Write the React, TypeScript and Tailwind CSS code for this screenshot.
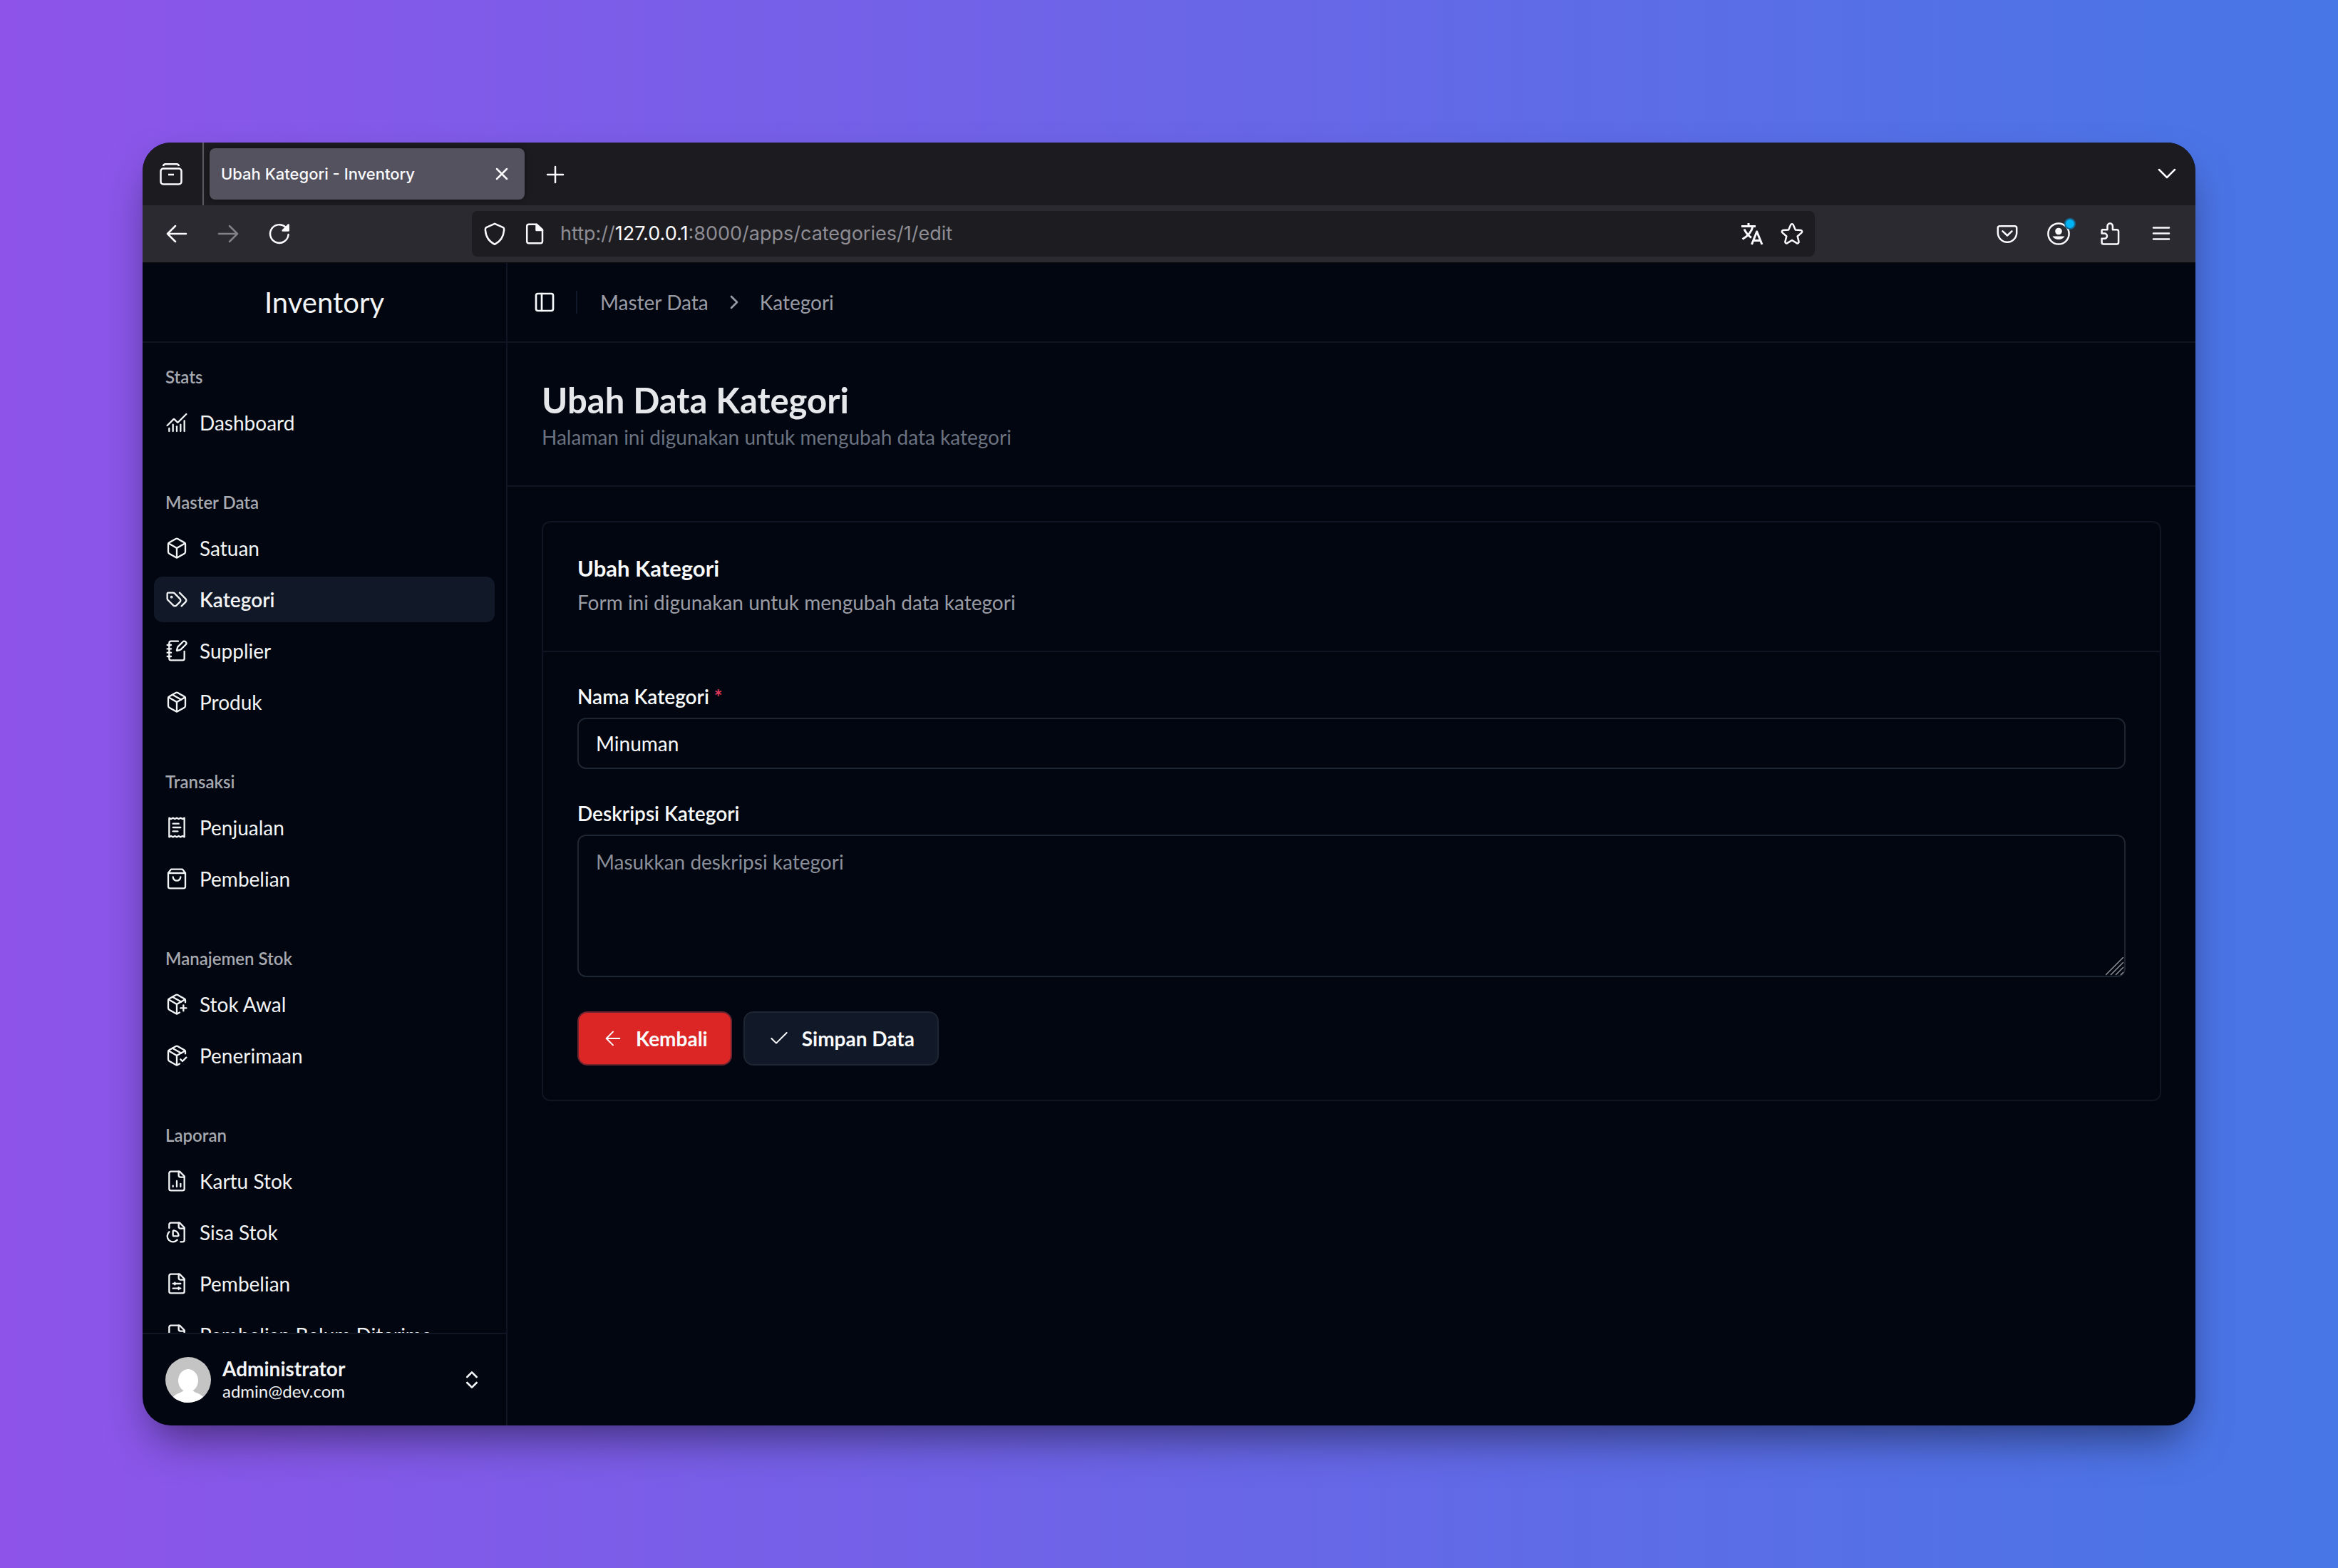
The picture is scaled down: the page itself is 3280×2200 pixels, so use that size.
import type { ReactNode } from "react";

type IconProps = { children: ReactNode; width?: string; className?: string };

/** Outline icon on a 24-unit grid. */
function Icon({ children, width = "1.5", className = "size-8 shrink-0" }: IconProps) {
  return (
    <svg
      viewBox="0 0 24 24"
      fill="none"
      stroke="currentColor"
      strokeWidth={width}
      strokeLinecap="round"
      strokeLinejoin="round"
      className={className}
      aria-hidden="true"
    >
      {children}
    </svg>
  );
}

/** Browser chrome icon on a 32-unit grid. */
function ChromeIcon({ children, className = "size-8 shrink-0" }: { children: ReactNode; className?: string }) {
  return (
    <svg
      viewBox="0 0 32 32"
      fill="none"
      stroke="currentColor"
      strokeWidth="2.5"
      strokeLinecap="round"
      strokeLinejoin="round"
      className={className}
      aria-hidden="true"
    >
      {children}
    </svg>
  );
}

const packageBody = (
  <>
    <path d="m7.5 4.27 9 5.15" />
    <path d="m3.3 7 8.7 5 8.7-5" />
    <path d="M12 22V12" />
  </>
);

const filePage = (
  <>
    <path d="M15 2H6a2 2 0 0 0-2 2v16a2 2 0 0 0 2 2h12a2 2 0 0 0 2-2V7Z" />
    <path d="M14 2v4a2 2 0 0 0 2 2h4" />
  </>
);

const icons = {
  chart: (
    <>
      <path d="M12 16v5" />
      <path d="M16 14v7" />
      <path d="M20 10v11" />
      <path d="m22 3-8.646 8.646a.5.5 0 0 1-.708 0L9.354 8.354a.5.5 0 0 0-.707 0L2 15" />
      <path d="M4 18v3" />
      <path d="M8 14v7" />
    </>
  ),
  box: (
    <>
      <path d="M21 8a2 2 0 0 0-1-1.73l-7-4a2 2 0 0 0-2 0l-7 4A2 2 0 0 0 3 8v8a2 2 0 0 0 1 1.73l7 4a2 2 0 0 0 2 0l7-4A2 2 0 0 0 21 16Z" />
      <path d="m3.3 7 8.7 5 8.7-5" />
      <path d="M12 22V12" />
    </>
  ),
  tags: (
    <>
      <path d="m15 5 6.3 6.3a2.4 2.4 0 0 1 0 3.4L17 19" />
      <path d="M9.586 5.586A2 2 0 0 0 8.172 5H3a1 1 0 0 0-1 1v5.172a2 2 0 0 0 .586 1.414L8.29 18.29a2.426 2.426 0 0 0 3.42 0l3.58-3.58a2.426 2.426 0 0 0 0-3.42z" />
      <circle cx="6.5" cy="9.5" r=".5" fill="currentColor" />
    </>
  ),
  notebook: (
    <>
      <path d="M13.4 2H6a2 2 0 0 0-2 2v16a2 2 0 0 0 2 2h12a2 2 0 0 0 2-2v-7.4" />
      <path d="M2 6h4" />
      <path d="M2 10h4" />
      <path d="M2 14h4" />
      <path d="M2 18h4" />
      <path d="M21.378 5.626a1 1 0 1 0-3.004-3.004l-5.01 5.012a2 2 0 0 0-.506.854l-.837 2.87a.5.5 0 0 0 .62.62l2.87-.837a2 2 0 0 0 .854-.506z" />
    </>
  ),
  package: (
    <>
      <path d="M21 8a2 2 0 0 0-1-1.73l-7-4a2 2 0 0 0-2 0l-7 4A2 2 0 0 0 3 8v8a2 2 0 0 0 1 1.73l7 4a2 2 0 0 0 2 0l7-4A2 2 0 0 0 21 16Z" />
      {packageBody}
    </>
  ),
  receipt: (
    <>
      <path d="M4 2v20l2-1 2 1 2-1 2 1 2-1 2 1 2-1 2 1V2l-2 1-2-1-2 1-2-1-2 1-2-1-2 1Z" />
      <path d="M14 8H8" />
      <path d="M16 12H8" />
      <path d="M13 16H8" />
    </>
  ),
  bag: (
    <>
      <path d="M6 2 3 6v14a2 2 0 0 0 2 2h14a2 2 0 0 0 2-2V6l-3-4Z" />
      <path d="M3 6h18" />
      <path d="M16 10a4 4 0 0 1-8 0" />
    </>
  ),
  packagePlus: (
    <>
      <path d="M16 16h6" />
      <path d="M19 13v6" />
      <path d="M21 10V8a2 2 0 0 0-1-1.73l-7-4a2 2 0 0 0-2 0l-7 4A2 2 0 0 0 3 8v8a2 2 0 0 0 1 1.73l7 4a2 2 0 0 0 2 0l2-1.14" />
      {packageBody}
    </>
  ),
  packageCheck: (
    <>
      <path d="m16 16 2 2 4-4" />
      <path d="M21 10V8a2 2 0 0 0-1-1.73l-7-4a2 2 0 0 0-2 0l-7 4A2 2 0 0 0 3 8v8a2 2 0 0 0 1 1.73l7 4a2 2 0 0 0 2 0l2-1.14" />
      {packageBody}
    </>
  ),
  fileChart: (
    <>
      {filePage}
      <path d="M8 18v-1" />
      <path d="M12 18v-6" />
      <path d="M16 18v-3" />
    </>
  ),
  filePie: (
    <>
      <path d="M14 2v4a2 2 0 0 0 2 2h4" />
      <path d="M16 22h2a2 2 0 0 0 2-2V7l-5-5H6a2 2 0 0 0-2 2v3.5" />
      <path d="M4.017 11.512a6 6 0 1 0 8.466 8.475" />
      <path d="M9 16a1 1 0 0 1-1-1v-4c0-.552.45-1.008.995-.917a6 6 0 0 1 4.922 4.922c.091.544-.365.995-.917.995z" />
    </>
  ),
  fileSliders: (
    <>
      {filePage}
      <path d="M8 12h8" />
      <path d="M10 11v2" />
      <path d="M8 17h8" />
      <path d="M14 16v2" />
    </>
  ),
  file: filePage,
};

type MenuItem = { label: string; icon: keyof typeof icons; active?: boolean };

const menu: { title: string; items: MenuItem[] }[] = [
  { title: "Stats", items: [{ label: "Dashboard", icon: "chart" }] },
  {
    title: "Master Data",
    items: [
      { label: "Satuan", icon: "box" },
      { label: "Kategori", icon: "tags", active: true },
      { label: "Supplier", icon: "notebook" },
      { label: "Produk", icon: "package" },
    ],
  },
  {
    title: "Transaksi",
    items: [
      { label: "Penjualan", icon: "receipt" },
      { label: "Pembelian", icon: "bag" },
    ],
  },
  {
    title: "Manajemen Stok",
    items: [
      { label: "Stok Awal", icon: "packagePlus" },
      { label: "Penerimaan", icon: "packageCheck" },
    ],
  },
  {
    title: "Laporan",
    items: [
      { label: "Kartu Stok", icon: "fileChart" },
      { label: "Sisa Stok", icon: "filePie" },
      { label: "Pembelian", icon: "fileSliders" },
      { label: "Pembelian Belum Diterima", icon: "file" },
    ],
  },
];

function ChromeButton({ label, children, className = "" }: { label: string; children: ReactNode; className?: string }) {
  return (
    <button type="button" aria-label={label} className={`flex h-16 w-16 shrink-0 items-center justify-center ${className}`}>
      {children}
    </button>
  );
}

function TabStrip() {
  return (
    <div className="flex h-[88px] shrink-0 items-center bg-[#1c1b20] pr-2 text-[#fbfbfe]">
      <button type="button" aria-label="Firefox View" className="flex h-full w-[86px] shrink-0 items-center justify-center border-r-2 border-[#5b5b62] pr-1">
        <ChromeIcon>
          <rect x="1.5" y="8.5" width="29" height="22" rx="3.5" />
          <path d="M5 5C5.5 2.8 6.5 2.2 8 2.2h16c1.5 0 2.500.6 3 2.800" strokeLinecap="butt" />
          <path d="M12 17h8" strokeLinecap="butt" />
        </ChromeIcon>
      </button>
      <div className="ml-2 flex h-[72px] w-[442px] items-center justify-between rounded-lg bg-[#54525e] pr-2 pl-4 shadow-[0_0_8px_rgba(0,0,0,0.4)]">
        <span className="text-[22px] font-medium">Ubah Kategori - Inventory</span>
        <button type="button" aria-label="Tutup tab" className="flex size-12 items-center justify-center">
          <ChromeIcon>
            <path d="M9 9 23 23M23 9 9 23" />
          </ChromeIcon>
        </button>
      </div>
      <ChromeButton label="Tab baru" className="ml-3">
        <ChromeIcon>
          <path d="M4 17h22M15 6v22" />
        </ChromeIcon>
      </ChromeButton>
      <ChromeButton label="Daftar tab" className="ml-auto">
        <ChromeIcon>
          <path d="m5 10 11 11 11-11" />
        </ChromeIcon>
      </ChromeButton>
    </div>
  );
}

function Toolbar() {
  return (
    <div className="flex h-[81px] shrink-0 items-center border-b border-[#0c0c0d] bg-[#2b2a30] px-4 text-[#fbfbfe]">
      <div className="flex gap-2">
        <ChromeButton label="Kembali">
          <ChromeIcon>
            <path d="M29 16H3M14 5 3 16l11 11" />
          </ChromeIcon>
        </ChromeButton>
        <ChromeButton label="Maju" className="text-[#828187]">
          <ChromeIcon>
            <path d="M3 16h26M18 5l11 11-11 11" />
          </ChromeIcon>
        </ChromeButton>
        <ChromeButton label="Muat ulang">
          <ChromeIcon>
            <path d="M28.6 17A12.8 12.8 0 1 1 24.5 6.6" />
            <path d="M28.7 3.5v8h-8Z" fill="currentColor" />
          </ChromeIcon>
        </ChromeButton>
      </div>
      <div className="mx-[238px] flex h-16 min-w-0 flex-1 items-center rounded-lg bg-[#1d1c21] px-4">
        <ChromeIcon>
          <path d="M16 1.8 4.2 7.2C2.8 8 2.7 9 2.9 10.8 3.6 20.5 7.5 26.5 16 30.8 24.5 26.5 28.4 20.5 29.1 10.8 29.3 9 29.2 8 27.8 7.2Z" />
        </ChromeIcon>
        <ChromeIcon className="ml-6 size-8 shrink-0">
          <path d="M8 2.8H19L27 10.5V26.5A2.8 2.8 0 0 1 24.2 29.3H8A2.8 2.8 0 0 1 5.2 26.5V5.6A2.8 2.8 0 0 1 8 2.8Z" />
          <path d="M18.5 3V11H27Z" fill="currentColor" />
        </ChromeIcon>
        <span className="ml-5 flex-1 text-[27px] whitespace-nowrap text-[#8e8d93]">
          http://<span className="text-[#fbfbfe]">127.0.0.1</span>:8000/apps/categories/1/edit
        </span>
        <ChromeIcon>
          <path d="M1 5.5h20M11 1v4.5M17 5.5C15.5 13 9.5 19.5 2.5 23.5M5 9.5C7.5 15 10.5 18.5 15 21.5" strokeLinecap="butt" strokeWidth="3" />
          <path d="M15.5 31 22.7 13 30 31M18 25.5h9.5" strokeLinecap="butt" strokeWidth="3" />
        </ChromeIcon>
        <ChromeIcon className="ml-6 size-8 shrink-0">
          <path d="M14.3 3.3a1.9 1.9 0 0 1 3.4 0l3.1 7.1 7.7.7a1.9 1.9 0 0 1 1.1 3.3l-5.9 5.1 1.9 7.6a1.9 1.9 0 0 1-2.9 2L16 25l-6.7 4.1a1.9 1.9 0 0 1-2.9-2l1.9-7.6-5.9-5.1a1.9 1.9 0 0 1 1.1-3.3l7.7-.7Z" />
        </ChromeIcon>
      </div>
      <div className="flex gap-2">
        <ChromeButton label="Simpan ke Pocket">
          <ChromeIcon>
            <path d="M5 5.2H27A2.6 2.6 0 0 1 29.2 7.8V14.5A13.2 13.2 0 0 1 2.8 14.5V7.8A2.6 2.6 0 0 1 5 5.2Z" />
            <path d="m9.5 12.3 6.5 6.2 6.5-6.2" />
          </ChromeIcon>
        </ChromeButton>
        <ChromeButton label="Akun" className="relative">
          <ChromeIcon>
            <circle cx="16" cy="16" r="14.6" />
            <circle cx="16" cy="12.5" r="4.8" fill="currentColor" stroke="none" />
            <path d="M7.5 19.5H24.5A9.5 8 0 0 1 7.5 19.5Z" fill="currentColor" stroke="none" />
          </ChromeIcon>
          <span className="absolute top-2.5 right-2 size-4 rounded-full border-2 border-[#146a94] bg-[#00b3f4]" />
        </ChromeButton>
        <ChromeButton label="Ekstensi">
          <ChromeIcon>
            <path d="M5.5 10.2H12.5V5.2A3.7 3.7 0 0 1 19.9 5.2V10.2H25.5A2.6 2.6 0 0 1 28.1 12.8V28A2.6 2.6 0 0 1 25.5 30.6H7.2A2.6 2.6 0 0 1 4.6 28V22.8H8.4A3.6 3.6 0 0 0 8.4 15.6H4.6V11.2Z" />
          </ChromeIcon>
        </ChromeButton>
        <ChromeButton label="Menu aplikasi">
          <ChromeIcon>
            <path d="M5 7.5h22M5 15.5h22M5 23.5h22" />
          </ChromeIcon>
        </ChromeButton>
      </div>
    </div>
  );
}

function Sidebar() {
  return (
    <aside className="flex w-[512px] shrink-0 flex-col border-r-2 border-[#0f1522]">
      <div className="flex h-28 shrink-0 items-center justify-center border-b-2 border-[#0f1522] text-[40px] text-[#f3f4f6]">
        Inventory
      </div>
      <nav className="flex min-h-0 flex-1 flex-col gap-4 overflow-hidden">
        {menu.map((group) => (
          <section key={group.title} className="shrink-0 p-4">
            <h2 className="flex h-16 items-center px-4 text-2xl font-semibold text-[#a7a9b0]">{group.title}</h2>
            <ul className="flex flex-col gap-2">
              {group.items.map((item) => (
                <li key={item.label}>
                  <a
                    href="#"
                    aria-current={item.active ? "page" : undefined}
                    className={
                      item.active
                        ? "flex h-16 items-center gap-4 rounded-xl bg-[#111827] px-4 text-[28px] font-semibold whitespace-nowrap text-[#f3f4f6]"
                        : "flex h-16 items-center gap-4 rounded-xl px-4 text-[28px] whitespace-nowrap text-[#f3f4f6]"
                    }
                  >
                    <Icon width="1.75">{icons[item.icon]}</Icon>
                    {item.label}
                  </a>
                </li>
              ))}
            </ul>
          </section>
        ))}
      </nav>
      <div className="shrink-0 border-t-2 border-[#0f1522] p-4">
        <button type="button" className="flex h-24 w-full items-center gap-4 px-4 text-left text-[#f3f4f6]">
          <svg viewBox="0 0 64 64" className="size-16 shrink-0 rounded-full bg-[#c4c4c4]" aria-hidden="true">
            <ellipse cx="32" cy="33" rx="14" ry="16" fill="#fff" />
            <path d="M26 45h12c0 6 12 4 17 14v5H9v-5c5-10 17-8 17-14Z" fill="#fff" />
          </svg>
          <span className="flex flex-1 flex-col">
            <span className="text-[28px] leading-8 font-bold">Administrator</span>
            <span className="text-2xl leading-8">admin@dev.com</span>
          </span>
          <Icon width="2">
            <path d="m7 15 5 5 5-5" />
            <path d="m7 9 5-5 5 5" />
          </Icon>
        </button>
      </div>
    </aside>
  );
}

function Breadcrumb() {
  return (
    <header className="flex h-28 shrink-0 items-center border-b-2 border-[#0f1522] px-9">
      <button type="button" aria-label="Buka atau tutup sidebar" className="text-[#f9fafb]">
        <Icon width="2">
          <rect width="18" height="18" x="3" y="3" rx="2" />
          <path d="M9 3v18" />
        </Icon>
      </button>
      <span className="ml-7 h-8 w-0.5 bg-[#111827]" />
      <nav aria-label="Breadcrumb" className="ml-8 flex items-center gap-5 text-[28px] text-[#9a9ca5]">
        <a href="#">Master Data</a>
        <Icon width="2">
          <path d="m9 18 6-6-6-6" />
        </Icon>
        <a href="#">Kategori</a>
      </nav>
    </header>
  );
}

function CategoryForm() {
  return (
    <section className="rounded-xl border-2 border-[#0f1522]">
      <div className="border-b-2 border-[#0f1522] p-12">
        <h2 className="text-[31px] leading-8 font-bold text-[#f9fafb]">Ubah Kategori</h2>
        <p className="mt-3 text-[28px] leading-10 text-[#9a9ca5]">Form ini digunakan untuk mengubah data kategori</p>
      </div>
      <form className="flex flex-col gap-12 p-12" onSubmit={(event) => event.preventDefault()}>
        <div className="flex flex-col gap-4">
          <label htmlFor="name" className="text-[28px] leading-7 font-semibold text-[#f9fafb]">
            Nama Kategori <span className="font-bold text-[#e03a5c]">*</span>
          </label>
          <input
            id="name"
            type="text"
            defaultValue="Minuman"
            className="h-[72px] w-full rounded-xl border-2 border-[#1f2633] bg-transparent px-6 text-[28px] text-[#f9fafb] outline-none"
          />
        </div>
        <div className="flex flex-col gap-4">
          <label htmlFor="description" className="text-[28px] leading-7 font-semibold text-[#f9fafb]">
            Deskripsi Kategori
          </label>
          <div className="relative flex">
            <textarea
              id="description"
              placeholder="Masukkan deskripsi kategori"
              className="h-[200px] w-full resize-none rounded-xl border-2 border-[#1f2633] bg-transparent px-6 py-4 text-[28px] leading-10 text-[#f9fafb] outline-none placeholder:text-[#8b8f99]"
            />
            <svg viewBox="0 0 26 26" className="pointer-events-none absolute right-0.5 bottom-0.5 size-[26px]" stroke="#8f9198" strokeWidth="1.5" aria-hidden="true">
              <path d="M0 25 25 0M7 25 25 7M14 25 25 14M21 25 25 21" />
            </svg>
          </div>
        </div>
        <div className="flex gap-4">
          <button type="button" className="flex h-[76px] items-center gap-4 rounded-[14px] border-2 border-[#6b2430] bg-[#dc2626] px-8 text-[28px] font-bold text-[#f9fafb]">
            <Icon>
              <path d="m12 19-7-7 7-7" />
              <path d="M19 12H5" />
            </Icon>
            Kembali
          </button>
          <button type="submit" className="flex h-[76px] items-center gap-4 rounded-[14px] border-2 border-[#1f2633] bg-[#111827] px-8 text-[28px] font-bold text-[#f9fafb]">
            <Icon>
              <path d="M20 6 9 17l-5-5" />
            </Icon>
            Simpan Data
          </button>
        </div>
      </form>
    </section>
  );
}

export default function App() {
  return (
    <div className="h-screen bg-linear-to-r/srgb from-[#8e54e9] to-[#4776e6] p-[200px] font-[Inter,sans-serif]">
      <div className="flex h-full flex-col overflow-hidden rounded-[40px] bg-[#010610] shadow-[0_30px_60px_-15px_rgba(0,0,0,0.5)]">
        <TabStrip />
        <Toolbar />
        <div className="flex min-h-0 flex-1 font-[Lato,sans-serif]">
          <Sidebar />
          <main className="min-w-0 flex-1">
            <Breadcrumb />
            <div className="border-b-2 border-[#0f1522] p-12">
              <h1 className="text-[49px] leading-16 font-bold text-[#e5e7eb]">Ubah Data Kategori</h1>
              <p className="text-[28px] leading-10 text-[#6b7280]">Halaman ini digunakan untuk mengubah data kategori</p>
            </div>
            <div className="p-12">
              <CategoryForm />
            </div>
          </main>
        </div>
      </div>
    </div>
  );
}
